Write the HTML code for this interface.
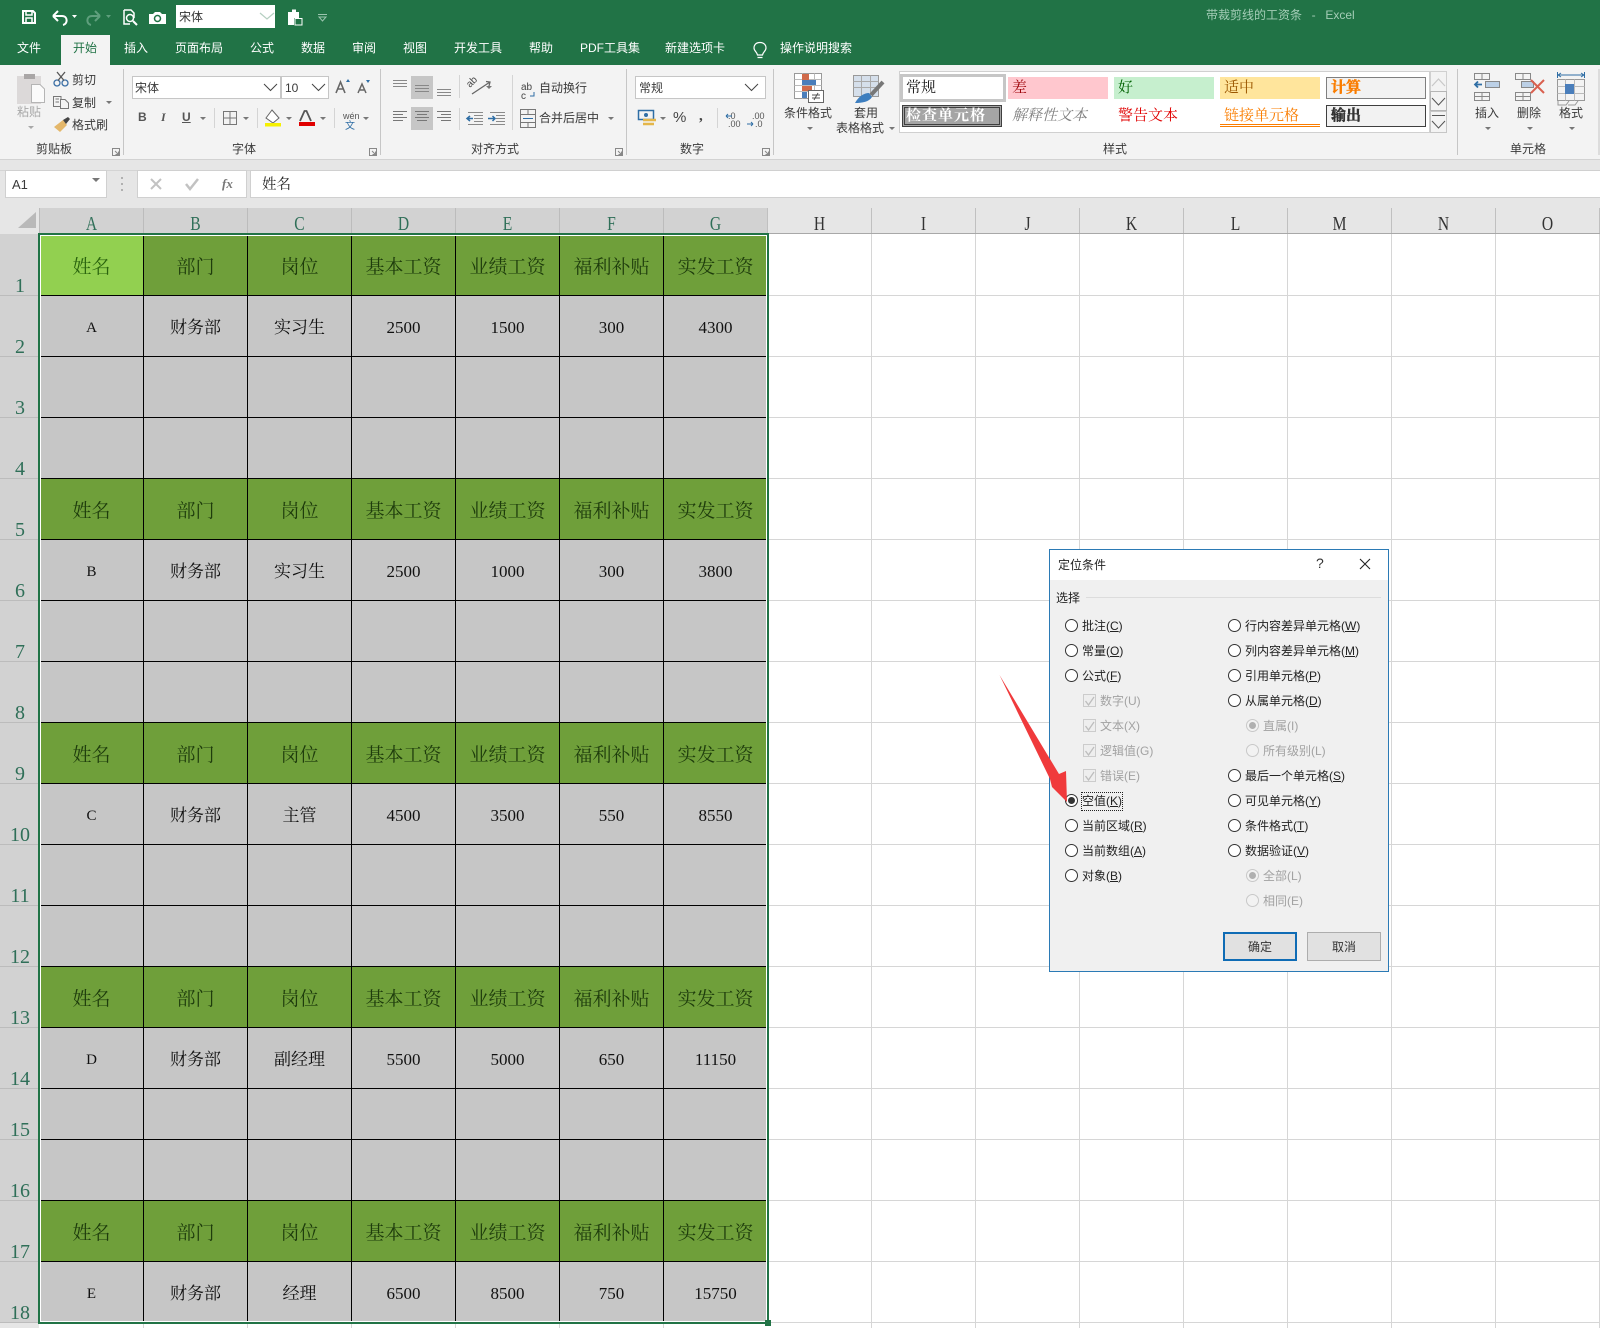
<!DOCTYPE html>
<html lang="zh"><head><meta charset="utf-8"><title>带裁剪线的工资条 - Excel</title>
<style>
*{box-sizing:border-box}
html,body{margin:0;padding:0}
body{width:1600px;height:1328px;position:relative;overflow:hidden;background:#fff;font:12px/16px "Liberation Sans","Noto Sans CJK SC",sans-serif;color:#333}
.a{position:absolute}
.t{position:absolute;white-space:nowrap;line-height:16px;font-size:12px;color:#3a3a3a}
.w{color:#fff}
.s{font-family:"Liberation Serif","Noto Serif CJK SC",serif;font-size:15px;line-height:20px}
svg{position:absolute;left:0;top:0;overflow:visible}
table{position:absolute;left:40px;top:235px;border-collapse:separate;border-spacing:0;table-layout:fixed;width:728px}
td{width:104px;height:61px;padding:4px 0 0;background:#c6c6c6;border-right:1px solid #000;border-bottom:1px solid #000;text-align:center;font:17px/20px "Liberation Serif","Noto Serif CJK SC",serif;color:#111}
td.h{background:#6f9f3a;color:#1e3c0c;font-size:19px;padding-top:6px}
td.act{background:#92d050;color:#2a640e}
td.m{font:15px/20px "Liberation Serif",serif}
tr.sh td{height:51px}
tr.l18 td{height:60px}
.r{position:absolute;width:13px;height:13px;border:1.3px solid #333;border-radius:50%;background:#fff}
.r.d{border-color:#c8c8c8;background:#f2f2f2}
.c{position:absolute;width:13px;height:13px;border:1px solid #ccc;background:#eee}
.l{position:absolute;white-space:nowrap;font-size:12px;line-height:16px;color:#222}
.l.g{color:#a2a2a2}
</style></head><body>

<!-- title / tabs -->
<div class="a" style="left:0;top:0;width:1600px;height:65px;background:#217346"></div>
<div class="a" style="left:61px;top:35px;width:49px;height:30px;background:#f3f3f3"></div>
<div class="a" style="left:176px;top:5px;width:99px;height:23px;background:#fff"></div>
<div class="t" style="left:179px;top:9px;color:#333">宋体</div>
<div class="t" style="left:1206px;top:7px;color:#a4cdb7;word-spacing:1.5px">带裁剪线的工资条 &nbsp;- &nbsp;Excel</div>
<div class="t w" style="left:17px;top:40px">文件</div>
<div class="t" style="left:73px;top:40px;color:#217346">开始</div>
<div class="t w" style="left:124px;top:40px">插入</div>
<div class="t w" style="left:175px;top:40px">页面布局</div>
<div class="t w" style="left:250px;top:40px">公式</div>
<div class="t w" style="left:301px;top:40px">数据</div>
<div class="t w" style="left:352px;top:40px">审阅</div>
<div class="t w" style="left:403px;top:40px">视图</div>
<div class="t w" style="left:454px;top:40px">开发工具</div>
<div class="t w" style="left:529px;top:40px">帮助</div>
<div class="t w" style="left:580px;top:40px">PDF工具集</div>
<div class="t w" style="left:665px;top:40px">新建选项卡</div>
<div class="t w" style="left:780px;top:40px">操作说明搜索</div>

<!-- ribbon -->
<div class="a" style="left:0;top:65px;width:1600px;height:95px;background:#f3f3f3;border-bottom:1px solid #d2d2d2"></div>
<div class="a" style="left:0;top:160px;width:1600px;height:48px;background:#e6e6e6"></div>
<div class="a" style="left:0;top:170px;width:1600px;height:1px;background:#d4d4d4"></div>
<div class="a" style="left:5px;top:170px;width:102px;height:28px;background:#fff;border:1px solid #d0d0d0"></div>
<div class="a" style="left:137px;top:170px;width:110px;height:28px;background:#fff;border:1px solid #d0d0d0"></div>
<div class="a" style="left:250px;top:170px;width:1350px;height:28px;background:#fff;border:1px solid #d0d0d0;border-right:0"></div>

<!-- ribbon controls boxes -->
<div class="a" style="left:132px;top:76px;width:149px;height:23px;background:#fff;border:1px solid #c6c6c6"></div>
<div class="a" style="left:281px;top:76px;width:48px;height:23px;background:#fff;border:1px solid #c6c6c6"></div>
<div class="a" style="left:635px;top:76px;width:131px;height:23px;background:#fff;border:1px solid #c6c6c6"></div>
<div class="a" style="left:411px;top:76px;width:22px;height:23px;background:#c6c6c6"></div>
<div class="a" style="left:411px;top:107px;width:22px;height:23px;background:#c6c6c6"></div>
<div class="t" style="left:17px;top:104px;color:#a8a8a8">粘贴</div>
<div class="t" style="left:72px;top:72px">剪切</div>
<div class="t" style="left:72px;top:95px">复制</div>
<div class="t" style="left:72px;top:117px">格式刷</div>
<div class="t" style="left:36px;top:141px">剪贴板</div>
<div class="t" style="left:135px;top:80px">宋体</div>
<div class="t" style="left:285px;top:80px">10</div>
<div class="t" style="left:232px;top:141px">字体</div>
<div class="t" style="left:471px;top:141px">对齐方式</div>
<div class="t" style="left:680px;top:141px">数字</div>
<div class="t" style="left:1103px;top:141px">样式</div>
<div class="t" style="left:1510px;top:141px">单元格</div>
<div class="t" style="left:539px;top:80px">自动换行</div>
<div class="t" style="left:539px;top:110px">合并后居中</div>
<div class="t" style="left:639px;top:80px">常规</div>
<div class="t" style="left:784px;top:105px">条件格式</div>
<div class="t" style="left:854px;top:105px">套用</div>
<div class="t" style="left:836px;top:120px">表格格式</div>
<div class="t" style="left:1475px;top:105px">插入</div>
<div class="t" style="left:1517px;top:105px">删除</div>
<div class="t" style="left:1559px;top:105px">格式</div>
<div class="t" style="left:138px;top:109px;font-weight:bold;color:#555">B</div>
<div class="t" style="left:161px;top:109px;font:italic bold 12px/16px 'Liberation Serif',serif;color:#555">I</div>
<div class="t" style="left:182px;top:109px;font-weight:bold;color:#555;text-decoration:underline">U</div>
<div class="t" style="left:673px;top:110px;font-size:15px;color:#444">%</div>
<div class="t" style="left:699px;top:108px;font:bold 15px/16px 'Liberation Serif',serif;color:#444">,</div>

<!-- style gallery -->
<div class="a" style="left:899px;top:71px;width:531px;height:62px;background:#fff;border:1px solid #d0d0d0"></div>
<div class="a" style="left:900px;top:74px;width:106px;height:28px;background:#fff;border:3px solid #c6c6c6"></div>
<div class="t s" style="left:906px;top:78px;color:#111">常规</div>
<div class="a" style="left:1008px;top:77px;width:100px;height:22px;background:#ffc7ce"></div>
<div class="t s" style="left:1012px;top:78px;color:#9c0006">差</div>
<div class="a" style="left:1114px;top:77px;width:100px;height:22px;background:#c6efce"></div>
<div class="t s" style="left:1118px;top:78px;color:#006100">好</div>
<div class="a" style="left:1220px;top:77px;width:100px;height:22px;background:#ffe59c"></div>
<div class="t s" style="left:1224px;top:78px;color:#9c5700">适中</div>
<div class="a" style="left:1326px;top:77px;width:100px;height:22px;background:#f2f2f2;border:1px solid #7f7f7f"></div>
<div class="t s" style="left:1331px;top:78px;color:#fa7d00;font-weight:bold;-webkit-text-stroke:.5px #fa7d00">计算</div>
<div class="a" style="left:902px;top:105px;width:100px;height:22px;background:#a5a5a5;border:3px double #3f3f3f"></div>
<div class="t s" style="left:906px;top:106px;color:#fff;font-weight:bold;letter-spacing:1px">检查单元格</div>
<div class="t s" style="left:1012px;top:106px;color:#7f7f7f;font-style:italic">解释性文本</div>
<div class="t s" style="left:1118px;top:106px;color:#e00000">警告文本</div>
<div class="t s" style="left:1224px;top:106px;color:#fa7d00">链接单元格</div>
<div class="a" style="left:1220px;top:124px;width:100px;height:3px;border-top:1px solid #fa7d00;border-bottom:1px solid #fa7d00"></div>
<div class="a" style="left:1326px;top:105px;width:100px;height:22px;background:#f2f2f2;border:1px solid #3f3f3f"></div>
<div class="t s" style="left:1331px;top:106px;color:#333;font-weight:bold;-webkit-text-stroke:.5px #333">输出</div>

<!-- formula bar -->
<div class="t" style="left:12px;top:177px;font-size:13px">A1</div>
<div class="t" style="left:262px;top:176px;font:14.5px/18px 'Liberation Serif','Noto Serif CJK SC',serif;color:#222">姓名</div>
<div class="t" style="left:222px;top:176px;font:italic bold 13px/16px 'Liberation Serif',serif;color:#777">fx</div>

<!-- grid and headers -->
<svg width="1600" height="1328" viewBox="0 0 1600 1328">
 <rect x="0" y="208" width="1600" height="26" fill="#e6e6e6"/>
 <rect x="40" y="208" width="728" height="26" fill="#d2d2d2"/>
 <rect x="0" y="234" width="39" height="1088" fill="#d2d2d2"/>
 <rect x="0" y="1322" width="39" height="6" fill="#e6e6e6"/>
 <polygon points="18,228 36,228 36,212" fill="#b9b9b9"/>
 <path d="M39.5 208V234M143.5 208V234M247.5 208V234M351.5 208V234M455.5 208V234M559.5 208V234M663.5 208V234M0 295.5H39M0 356.5H39M0 417.5H39M0 478.5H39M0 539.5H39M0 600.5H39M0 661.5H39M0 722.5H39M0 783.5H39M0 844.5H39M0 905.5H39M0 966.5H39M0 1027.5H39M0 1088.5H39M0 1139.5H39M0 1200.5H39M0 1261.5H39M0 1322.5H39" stroke="#bcbcbc" fill="none"/>
 <path d="M767.5 208V234M871.5 208V234M975.5 208V234M1079.5 208V234M1183.5 208V234M1287.5 208V234M1391.5 208V234M1495.5 208V234M1599.5 208V234" stroke="#c0c0c0" fill="none"/>
 <path d="M768 233.5H1600" stroke="#a8a8a8" fill="none"/>
 <path d="M871.5 234V1328M975.5 234V1328M1079.5 234V1328M1183.5 234V1328M1287.5 234V1328M1391.5 234V1328M1495.5 234V1328M1599.5 234V1328M143.5 1323V1328M247.5 1323V1328M351.5 1323V1328M455.5 1323V1328M559.5 1323V1328M663.5 1323V1328M768 295.5H1600M768 356.5H1600M768 417.5H1600M768 478.5H1600M768 539.5H1600M768 600.5H1600M768 661.5H1600M768 722.5H1600M768 783.5H1600M768 844.5H1600M768 905.5H1600M768 966.5H1600M768 1027.5H1600M768 1088.5H1600M768 1139.5H1600M768 1200.5H1600M768 1261.5H1600M768 1322.5H1600" stroke="#d6d6d6" fill="none"/>
 <g font-family="Liberation Serif" font-size="20" text-anchor="middle" fill="#2f6f58">
  <text transform="translate(91.5,230) scale(.78,1)">A</text><text transform="translate(195.5,230) scale(.78,1)">B</text><text transform="translate(299.5,230) scale(.78,1)">C</text><text transform="translate(403.5,230) scale(.78,1)">D</text><text transform="translate(507.5,230) scale(.78,1)">E</text><text transform="translate(611.5,230) scale(.78,1)">F</text><text transform="translate(715.5,230) scale(.78,1)">G</text>
 </g>
 <g font-family="Liberation Serif" font-size="20" text-anchor="middle" fill="#333">
  <text transform="translate(819.5,230) scale(.78,1)">H</text><text transform="translate(923.5,230) scale(.78,1)">I</text><text transform="translate(1027.5,230) scale(.78,1)">J</text><text transform="translate(1131.5,230) scale(.78,1)">K</text><text transform="translate(1235.5,230) scale(.78,1)">L</text><text transform="translate(1339.5,230) scale(.78,1)">M</text><text transform="translate(1443.5,230) scale(.78,1)">N</text><text transform="translate(1547.5,230) scale(.78,1)">O</text>
 </g>
 <g font-family="Liberation Serif" font-size="20" text-anchor="middle" fill="#2f6f58">
  <text x="20" y="292">1</text><text x="20" y="353">2</text><text x="20" y="414">3</text><text x="20" y="475">4</text><text x="20" y="536">5</text><text x="20" y="597">6</text><text x="20" y="658">7</text><text x="20" y="719">8</text><text x="20" y="780">9</text><text x="20" y="841">10</text><text x="20" y="902">11</text><text x="20" y="963">12</text><text x="20" y="1024">13</text><text x="20" y="1085">14</text><text x="20" y="1136">15</text><text x="20" y="1197">16</text><text x="20" y="1258">17</text><text x="20" y="1319">18</text>
 </g>
</svg>

<table>
<tr><td class="h act">姓名</td><td class="h">部门</td><td class="h">岗位</td><td class="h">基本工资</td><td class="h">业绩工资</td><td class="h">福利补贴</td><td class="h">实发工资</td></tr>
<tr><td class="m">A</td><td>财务部</td><td>实习生</td><td>2500</td><td>1500</td><td>300</td><td>4300</td></tr>
<tr><td></td><td></td><td></td><td></td><td></td><td></td><td></td></tr>
<tr><td></td><td></td><td></td><td></td><td></td><td></td><td></td></tr>
<tr><td class="h">姓名</td><td class="h">部门</td><td class="h">岗位</td><td class="h">基本工资</td><td class="h">业绩工资</td><td class="h">福利补贴</td><td class="h">实发工资</td></tr>
<tr><td class="m">B</td><td>财务部</td><td>实习生</td><td>2500</td><td>1000</td><td>300</td><td>3800</td></tr>
<tr><td></td><td></td><td></td><td></td><td></td><td></td><td></td></tr>
<tr><td></td><td></td><td></td><td></td><td></td><td></td><td></td></tr>
<tr><td class="h">姓名</td><td class="h">部门</td><td class="h">岗位</td><td class="h">基本工资</td><td class="h">业绩工资</td><td class="h">福利补贴</td><td class="h">实发工资</td></tr>
<tr><td class="m">C</td><td>财务部</td><td>主管</td><td>4500</td><td>3500</td><td>550</td><td>8550</td></tr>
<tr><td></td><td></td><td></td><td></td><td></td><td></td><td></td></tr>
<tr><td></td><td></td><td></td><td></td><td></td><td></td><td></td></tr>
<tr><td class="h">姓名</td><td class="h">部门</td><td class="h">岗位</td><td class="h">基本工资</td><td class="h">业绩工资</td><td class="h">福利补贴</td><td class="h">实发工资</td></tr>
<tr><td class="m">D</td><td>财务部</td><td>副经理</td><td>5500</td><td>5000</td><td>650</td><td>11150</td></tr>
<tr class="sh"><td></td><td></td><td></td><td></td><td></td><td></td><td></td></tr>
<tr><td></td><td></td><td></td><td></td><td></td><td></td><td></td></tr>
<tr><td class="h">姓名</td><td class="h">部门</td><td class="h">岗位</td><td class="h">基本工资</td><td class="h">业绩工资</td><td class="h">福利补贴</td><td class="h">实发工资</td></tr>
<tr class="l18"><td class="m">E</td><td>财务部</td><td>经理</td><td>6500</td><td>8500</td><td>750</td><td>15750</td></tr>
</table>
<!-- selection -->
<div class="a" style="left:38px;top:233px;width:731px;height:1091px;border:2px solid #217346;box-shadow:inset 0 0 0 1px #fff"></div>
<div class="a" style="left:765px;top:1320px;width:6px;height:6px;background:#217346"></div>

<!-- ribbon icons -->
<svg width="1600" height="200" viewBox="0 0 1600 200" fill="none">
 <!-- group separators -->
 <path d="M123.5 69V155M380.5 69V155M626.5 69V155M773.5 69V155M1457.5 69V155M1599 69V155" stroke="#c6c6c6"/>
 <path d="M214.5 108V128M257.5 108V128M334.5 108V128M459.5 75V98M459.5 108V130M512.5 75V130M717.5 108V128" stroke="#d4d4d4"/>
 <!-- QAT -->
 <g stroke="#fff" stroke-width="2">
  <path d="M23 11H33L35 13V23H23Z"/><path d="M26 11V15H32V11" stroke-width="1.5"/><path d="M26 23V18H32V23" stroke-width="1.5"/>
  <path d="M53 16L58 11M53 16L58 21M53 16H62C68 16 68 24 63 25"/>
 </g>
 <path d="M72 15h5l-2.5 3z" fill="#fff"/>
 <g stroke="#5f9f7d" stroke-width="2"><path d="M100 16L95 11M100 16L95 21M100 16H92C86 16 86 24 91 25"/></g>
 <path d="M106 15h5l-2.5 3z" fill="#5f9f7d"/>
 <path d="M124 10H131L134 13V18M124 10V24H130" stroke="#fff" stroke-width="1.5"/><circle cx="130" cy="18" r="3.5" stroke="#fff" stroke-width="1.5"/><path d="M133 21L137 25" stroke="#fff" stroke-width="2"/>
 <path d="M149 14H153L155 12H160L162 14H166V24H149Z" fill="#fff"/><circle cx="157.5" cy="18.5" r="3" stroke="#217346" stroke-width="1.5"/>
 <path d="M260 13L267 19L274 13" stroke="#b5cfc1" stroke-width="1.2"/>
 <path d="M288 12H292V9.5H296V12H299V18H294V25H288Z" fill="#fff"/><path d="M295 18.5H302V25H295Z" stroke="#fff"/>
 <path d="M318 14.5H327M319 17h7l-3.5 4z" stroke="#9cc5af"/>
 <path d="M760 42.5C755 42.5 754 46 754 48C754 51 757 52 757.5 55H762.5C763 52 766 51 766 48C766 46 765 42.500 760 42.5ZM757.5 57.5H762.5" stroke="#fff" stroke-width="1.2"/>
 <!-- paste -->
 <rect x="17" y="76" width="24" height="28" fill="#dcd9d9"/><rect x="24" y="74" width="11" height="5" fill="#a9a6a6"/>
 <path d="M31.5 84.5H40L44.5 89V102.5H31.5Z" fill="#fbfbfb" stroke="#b5b5b5"/>
 <path d="M28 126h6l-3 3z" fill="#a8a8a8"/>
 <!-- scissors -->
 <circle cx="57" cy="83" r="3" stroke="#3a6ea5" stroke-width="1.3"/><circle cx="65" cy="83" r="3" stroke="#3a6ea5" stroke-width="1.3"/>
 <path d="M58 80.5L65 72M64 80.5L57 72" stroke="#555" stroke-width="1.3"/>
 <!-- copy -->
 <path d="M53.5 96.5H61V106.5H53.5ZM55.5 99H59M55.5 102H59" stroke="#777"/><path d="M60.5 99.5H65L68.5 103V108.5H60.5Z" fill="#f3f3f3" stroke="#777"/>
 <path d="M106 101h6l-3 3z" fill="#777"/>
 <!-- brush -->
 <path d="M54 127L63 120L67 125L60 132Z" fill="#e4b76a"/><path d="M63 120L68 117L70 119L66 124Z" fill="#444"/>
 <!-- font -->
 <path d="M264 84L270.5 90.5L277 84M312 84L318.5 90.5L325 84M745 84L751.5 90.5L758 84" stroke="#444"/>
 <path d="M336 93L340.5 82L345 93M338 89H343" stroke="#666" stroke-width="1.6"/><path d="M346 82l2-3 2 3z" fill="#2f6ea5"/>
 <path d="M358 93L362 84L366 93M360 90H364" stroke="#666" stroke-width="1.5"/><path d="M366 80l2 3 2-3z" fill="#2f6ea5"/>
 <path d="M200 117h6l-3 3zM243 117h6l-3 3zM286 117h6l-3 3zM320 117h6l-3 3zM363 117h6l-3 3zM486 86h6l-3 3zM608 117h6l-3 3zM660 117h6l-3 3z" fill="#777"/>
 <path d="M223.5 111.5H236.5V124.5H223.5ZM230 111.5V124.5M223.5 118H236.5" stroke="#777"/>
 <path d="M272 110L279 118L273 123L266 118Z" fill="#fff" stroke="#666"/><rect x="265" y="123" width="16" height="3.5" fill="#f6f000"/>
 <path d="M300 121L304.5 111H306.5L311 121" stroke="#555" stroke-width="1.8"/><rect x="299" y="122" width="16" height="4" fill="#e00000"/>
 <text x="343" y="119" font-family="Liberation Sans" font-size="9" fill="#555">wén</text>
 <text x="345" y="129" font-family="Noto Sans CJK SC" font-size="10" fill="#2f6ea5">文</text>
 <!-- align -->
 <path d="M393 80.5H407M393 83.5H407M393 86.5H407M415 85.5H429M415 88.5H429M415 91.5H429M437 89.5H451M437 92.5H451M437 95.5H451" stroke="#888"/>
 <path d="M393 111.5H407M393 114.5H403M393 117.5H407M393 120.5H403M415 111.5H429M417 114.5H427M415 117.5H429M417 120.5H427M437 111.5H451M441 114.5H451M437 117.5H451M441 120.5H451" stroke="#777"/>
 <path d="M472 94L490 82M486 81.500L490 82L489 86" stroke="#666" stroke-width="1.3"/><text transform="translate(470,88) rotate(-45)" font-family="Liberation Sans" font-size="10" fill="#444">ab</text>
 <path d="M474 115.5H483M474 118.5H483M474 121.5H483M468 112.5H483M468 124.5H483M496 115.5H505M496 118.5H505M496 121.5H505M490 112.5H505M490 124.5H505" stroke="#8a8a8a"/>
 <path d="M467 118.5H473M470 116L467 118.5L470 121M488 118.5H495M492.5 116L495 118.5L492.5 121" stroke="#2f6ea5" stroke-width="1.5"/>
 <text x="521" y="90" font-family="Liberation Sans" font-size="10" fill="#444">ab</text><text x="521" y="99" font-family="Liberation Sans" font-size="10" fill="#444">c</text>
 <path d="M530 96H534V92" stroke="#2f6ea5"/>
 <path d="M520.5 109.5H535.5V127.5H520.5ZM520.5 114.5H535.5M520.5 122.5H535.5M528 109.5V114.5M528 122.5V127.5" stroke="#777"/><path d="M523 118.5H533" stroke="#2f6ea5"/>
 <!-- number -->
 <rect x="638.5" y="110.5" width="15" height="9" stroke="#2f6ea5" stroke-width="1.5"/><circle cx="646" cy="115" r="2" fill="#2f6ea5"/><path d="M643 120H656M643 124H654" stroke="#e4b64a" stroke-width="2.5"/>
 <text x="728" y="119" font-family="Liberation Sans" font-size="9" fill="#555">.0</text><text x="728" y="127" font-family="Liberation Sans" font-size="9" fill="#555">.00</text>
 <path d="M726 116H732M726 116L728 114M726 116L728 118" stroke="#2f6ea5"/>
 <text x="752" y="119" font-family="Liberation Sans" font-size="9" fill="#555">.00</text><text x="755" y="127" font-family="Liberation Sans" font-size="9" fill="#555">.0</text>
 <path d="M747 124H753M753 124L751 122M753 124L751 126" stroke="#2f6ea5"/>
 <!-- launchers -->
 <path d="M112.5 148.5H119.5V155.5H112.5ZM115 151L118.5 154.5M118.5 151.5V154.5H115.5M369.5 148.5H376.5V155.5H369.5ZM372 151L375.5 154.5M375.5 151.5V154.5H372.5M615.5 148.5H622.5V155.5H615.5ZM618 151L621.5 154.5M621.5 151.5V154.5H618.5M762.5 148.5H769.5V155.5H762.5ZM765 151L768.5 154.5M768.5 151.5V154.5H765.5" stroke="#888"/>
 <!-- conditional format -->
 <rect x="794.5" y="73.5" width="27" height="25" fill="#fff" stroke="#999"/>
 <path d="M802.5 73.5V98.5M814.5 73.5V98.5M794.5 79.5H821.5M794.5 85.5H821.5M794.5 91.5H821.5" stroke="#bbb"/>
 <rect x="802" y="74" width="7" height="6" fill="#d06a4a"/><rect x="802" y="80" width="14" height="5" fill="#4a7ebb"/><rect x="802" y="86" width="10" height="5" fill="#d06a4a"/><rect x="802" y="92" width="5" height="6" fill="#4a7ebb"/>
 <rect x="808.5" y="90.5" width="15" height="12" fill="#fff" stroke="#666"/><path d="M812 95H820M812 98H820M818 93L814 100" stroke="#555"/>
 <path d="M807 127h6l-3 3zM889 127h6l-3 3zM1485 127h6l-3 3zM1527 127h6l-3 3zM1569 127h6l-3 3z" fill="#777"/>
 <!-- format as table -->
 <rect x="853.5" y="75.5" width="25" height="21" fill="#d5dfeb" stroke="#999"/>
 <path d="M853.5 81.5H878.5M853.5 87.5H878.5M861.5 75.5V96.5M870.5 75.5V96.5" stroke="#a9a9a9"/>
 <path d="M883 82L871 95" stroke="#777" stroke-width="4"/><path d="M855 103C859 96 864 93 869 93L872 97C869 102 862 103 855 103Z" fill="#3d7ebf"/>
 <!-- gallery scroll -->
 <rect x="1430.5" y="71.5" width="16" height="20" fill="#f3f3f3" stroke="#d0d0d0"/><rect x="1430.5" y="91.5" width="16" height="19" fill="#f3f3f3" stroke="#b5b5b5"/><rect x="1430.5" y="111.5" width="16" height="21" fill="#f3f3f3" stroke="#c6c6c6"/>
 <path d="M1432 86L1438.5 79L1445 86" stroke="#c8c8c8" stroke-width="1.2"/><path d="M1432 98L1438.5 105L1445 98" stroke="#555"/><path d="M1432 115.5H1445M1432 121L1438.5 128L1445 121" stroke="#555"/>
 <!-- insert -->
 <path d="M1474.5 73.5H1489.5V79.5H1474.5ZM1482 73.5V79.5M1474.5 92.5H1489.5V100.5H1474.5ZM1482 92.5V100.5M1474.5 96.5H1489.5" stroke="#888"/>
 <rect x="1485.5" y="81.5" width="14" height="6" fill="#bcd0e6" stroke="#888"/><path d="M1475 84.5H1482M1478 81.5L1475 84.5L1478 87.5" stroke="#2f6ea5" stroke-width="1.8"/>
 <!-- delete -->
 <path d="M1515.5 73.5H1530.5V79.5H1515.5ZM1523 73.5V79.5M1515.5 92.5H1530.5V100.5H1515.5ZM1523 92.5V100.5M1515.5 96.5H1530.5" stroke="#888"/>
 <rect x="1521.5" y="81.5" width="12" height="6" fill="#bcd0e6" stroke="#888"/><path d="M1531 80L1544 93M1544 80L1531 93" stroke="#d9604f" stroke-width="2"/>
 <!-- format -->
 <path d="M1558 75H1584M1558 75L1561 73M1558 75L1561 77M1584 75L1581 73M1584 75L1581 77" stroke="#2f6ea5"/>
 <path d="M1557.5 72V78M1584.5 72V78" stroke="#2f6ea5"/>
 <rect x="1557.5" y="79.5" width="27" height="21" stroke="#999"/><path d="M1557.5 86.5H1584.5M1557.5 93.5H1584.5M1565.5 79.5V100.5M1574.5 79.5V100.5" stroke="#bbb"/>
 <rect x="1565" y="84" width="9" height="10" fill="#4a7ebb"/>
 <path d="M1558 101V105H1566L1569 101M1568 105H1575L1578 101" stroke="#999"/>
 <!-- formula bar -->
 <path d="M92 178h8l-4 4z" fill="#777"/>
 <path d="M121 177h2v2h-2zM121 183h2v2h-2zM121 189h2v2h-2z" fill="#b0b0b0"/>
 <path d="M151 179L161 189M161 179L151 189" stroke="#c2c2c2" stroke-width="2"/>
 <path d="M186 184L190 189L198 179" stroke="#c2c2c2" stroke-width="2.5"/>
</svg>

<!-- dialog -->
<div class="a" style="left:1049px;top:549px;width:340px;height:423px;background:#f0f0f0;border:1px solid #2b7ab5"></div>
<div class="a" style="left:1050px;top:550px;width:338px;height:30px;background:#fff"></div>
<div class="l" style="left:1058px;top:557px">定位条件</div>
<div class="l" style="left:1316px;top:555px;font-size:14px;color:#333">?</div>
<svg width="1600" height="1328" viewBox="0 0 1600 1328" fill="none"><path d="M1360 559L1370 569M1370 559L1360 569" stroke="#222" stroke-width="1.1"/><path d="M1086 597.5H1381" stroke="#dcdcdc"/></svg>
<div class="l" style="left:1056px;top:590px">选择</div>

<div class="r" style="left:1065px;top:619px"></div><div class="l" style="left:1082px;top:618px">批注(<u>C</u>)</div>
<div class="r" style="left:1065px;top:644px"></div><div class="l" style="left:1082px;top:643px">常量(<u>O</u>)</div>
<div class="r" style="left:1065px;top:669px"></div><div class="l" style="left:1082px;top:668px">公式(<u>F</u>)</div>
<div class="c" style="left:1083px;top:694px"></div><div class="l g" style="left:1100px;top:693px">数字(U)</div>
<div class="c" style="left:1083px;top:719px"></div><div class="l g" style="left:1100px;top:718px">文本(X)</div>
<div class="c" style="left:1083px;top:744px"></div><div class="l g" style="left:1100px;top:743px">逻辑值(G)</div>
<div class="c" style="left:1083px;top:769px"></div><div class="l g" style="left:1100px;top:768px">错误(E)</div>
<div class="r" style="left:1065px;top:794px"></div><div class="a" style="left:1068px;top:797px;width:7px;height:7px;border-radius:50%;background:#333"></div>
<div class="a" style="left:1081px;top:792px;width:42px;height:19px;border:1px dotted #222"></div><div class="l" style="left:1082px;top:793px">空值(<u>K</u>)</div>
<div class="r" style="left:1065px;top:819px"></div><div class="l" style="left:1082px;top:818px">当前区域(<u>R</u>)</div>
<div class="r" style="left:1065px;top:844px"></div><div class="l" style="left:1082px;top:843px">当前数组(<u>A</u>)</div>
<div class="r" style="left:1065px;top:869px"></div><div class="l" style="left:1082px;top:868px">对象(<u>B</u>)</div>

<div class="r" style="left:1228px;top:619px"></div><div class="l" style="left:1245px;top:618px">行内容差异单元格(<u>W</u>)</div>
<div class="r" style="left:1228px;top:644px"></div><div class="l" style="left:1245px;top:643px">列内容差异单元格(<u>M</u>)</div>
<div class="r" style="left:1228px;top:669px"></div><div class="l" style="left:1245px;top:668px">引用单元格(<u>P</u>)</div>
<div class="r" style="left:1228px;top:694px"></div><div class="l" style="left:1245px;top:693px">从属单元格(<u>D</u>)</div>
<div class="r d" style="left:1246px;top:719px"></div><div class="a" style="left:1249px;top:722px;width:7px;height:7px;border-radius:50%;background:#b0b0b0"></div><div class="l g" style="left:1263px;top:718px">直属(I)</div>
<div class="r d" style="left:1246px;top:744px"></div><div class="l g" style="left:1263px;top:743px">所有级别(L)</div>
<div class="r" style="left:1228px;top:769px"></div><div class="l" style="left:1245px;top:768px">最后一个单元格(<u>S</u>)</div>
<div class="r" style="left:1228px;top:794px"></div><div class="l" style="left:1245px;top:793px">可见单元格(<u>Y</u>)</div>
<div class="r" style="left:1228px;top:819px"></div><div class="l" style="left:1245px;top:818px">条件格式(<u>T</u>)</div>
<div class="r" style="left:1228px;top:844px"></div><div class="l" style="left:1245px;top:843px">数据验证(<u>V</u>)</div>
<div class="r d" style="left:1246px;top:869px"></div><div class="a" style="left:1249px;top:872px;width:7px;height:7px;border-radius:50%;background:#b0b0b0"></div><div class="l g" style="left:1263px;top:868px">全部(L)</div>
<div class="r d" style="left:1246px;top:894px"></div><div class="l g" style="left:1263px;top:893px">相同(E)</div>

<div class="a" style="left:1223px;top:932px;width:74px;height:29px;background:#e1e1e1;border:2px solid #0f6cb5;text-align:center;line-height:26px">确定</div>
<div class="a" style="left:1307px;top:932px;width:74px;height:29px;background:#e1e1e1;border:1px solid #adadad;text-align:center;line-height:28px">取消</div>

<!-- red arrow + dialog check marks -->
<svg width="1600" height="1328" viewBox="0 0 1600 1328" fill="none">
 <path d="M1085.5 701L1088.5 705L1094 697M1085.5 726L1088.5 730L1094 722M1085.5 751L1088.5 755L1094 747M1085.5 776L1088.5 780L1094 772" stroke="#bdbdbd" stroke-width="1.3"/>
 <polygon points="999.5,675 1059,774 1066,771 1067,802 1052,787 1050,779" fill="#f03a3c"/>
</svg>
</body></html>
